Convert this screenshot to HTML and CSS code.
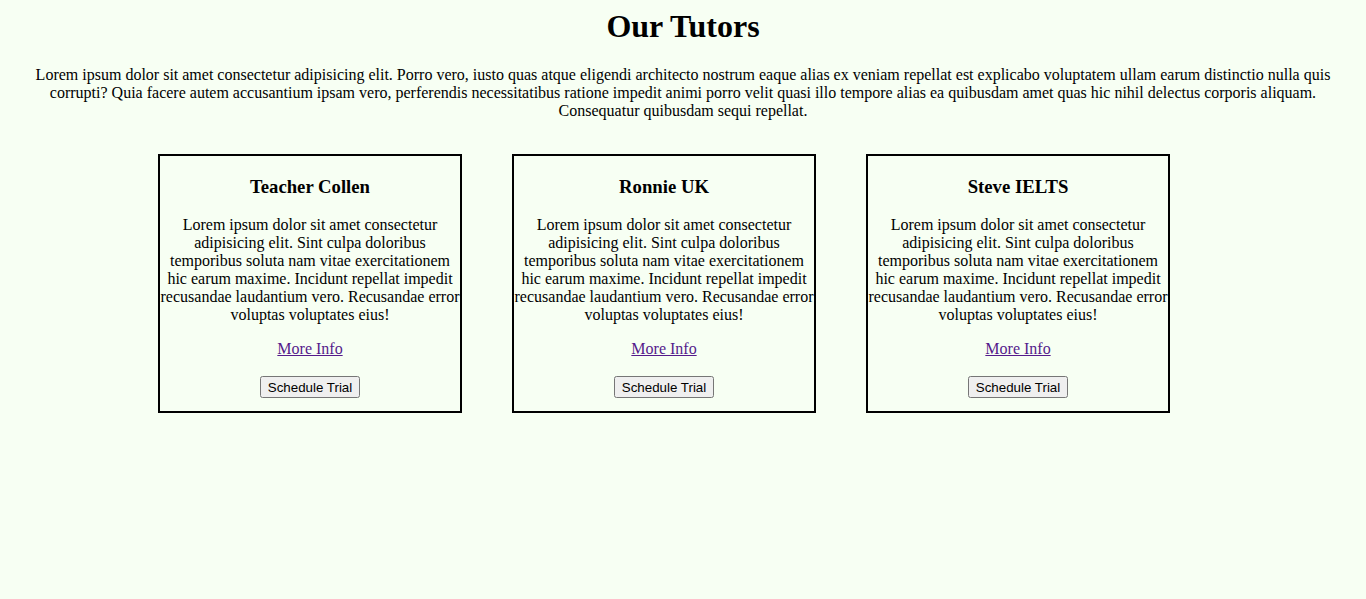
FILE: index.html
```html
<!DOCTYPE html>
<html>
<head>
<meta charset="utf-8">
<title>Our Tutors</title>
<link rel="stylesheet" href="styles.css">
</head>
<body>
<h1 class="title">Our Tutors</h1>
<p class="intro">Lorem ipsum dolor sit amet consectetur adipisicing elit. Porro vero, iusto quas atque eligendi architecto nostrum eaque alias ex veniam repellat est explicabo voluptatem ullam earum distinctio nulla quis corrupti? Quia facere autem accusantium ipsam vero, perferendis necessitatibus ratione impedit animi porro velit quasi illo tempore alias ea quibusdam amet quas hic nihil delectus corporis aliquam. Consequatur quibusdam sequi repellat.</p>
<div class="cards">
  <div class="card">
    <h3 class="card-name">Teacher Collen</h3>
    <p class="card-text">Lorem ipsum dolor sit amet consectetur adipisicing elit. Sint culpa doloribus temporibus soluta nam vitae exercitationem hic earum maxime. Incidunt repellat impedit recusandae laudantium vero. Recusandae error voluptas voluptates eius!</p>
    <p class="card-link"><a href="#">More Info</a></p>
    <p class="card-action"><button class="btn">Schedule Trial</button></p>
  </div>
  <div class="card">
    <h3 class="card-name">Ronnie UK</h3>
    <p class="card-text">Lorem ipsum dolor sit amet consectetur adipisicing elit. Sint culpa doloribus temporibus soluta nam vitae exercitationem hic earum maxime. Incidunt repellat impedit recusandae laudantium vero. Recusandae error voluptas voluptates eius!</p>
    <p class="card-link"><a href="#">More Info</a></p>
    <p class="card-action"><button class="btn">Schedule Trial</button></p>
  </div>
  <div class="card">
    <h3 class="card-name">Steve IELTS</h3>
    <p class="card-text">Lorem ipsum dolor sit amet consectetur adipisicing elit. Sint culpa doloribus temporibus soluta nam vitae exercitationem hic earum maxime. Incidunt repellat impedit recusandae laudantium vero. Recusandae error voluptas voluptates eius!</p>
    <p class="card-link"><a href="#">More Info</a></p>
    <p class="card-action"><button class="btn">Schedule Trial</button></p>
  </div>
</div>
</body>
</html>
```
FILE: styles.css
```css
html {
  background: #f7fff3;
}
body {
  margin: 8px;
  font-family: "Liberation Serif", "Times New Roman", serif;
  font-size: 16px;
  color: #000;
  text-align: center;
}
.title {
  font-size: 32px;
  font-weight: bold;
  margin: 0 0 21.44px;
}
.intro {
  margin: 0;
}
.cards {
  display: flex;
  justify-content: center;
  gap: 50px;
  margin-top: 33.5px;
  padding-right: 38px;
}
.card {
  width: 300px;
  border: 2px solid #000;
  display: flow-root;
}
.card-name {
  font-size: 18.72px;
  margin: 19.72px 0 18.72px;
}
.card-text {
  margin: 16px 0;
}
.card-link {
  margin: 16px 0;
}
.card-link a {
  color: #551a8b;
}
.card-action {
  margin: 18px 0 13px;
}
.btn {
  font-family: "Liberation Sans", Arial, sans-serif;
  font-size: 13.333px;
  padding: 2px 6px 1px;
}
```
